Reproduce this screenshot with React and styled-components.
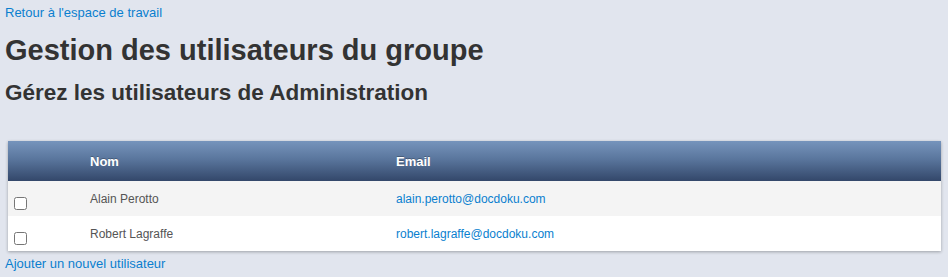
import React from "react";
import styled, { createGlobalStyle } from "styled-components";

const users = [
  { name: "Alain Perotto", email: "alain.perotto@docdoku.com" },
  { name: "Robert Lagraffe", email: "robert.lagraffe@docdoku.com" },
];

const GlobalStyle = createGlobalStyle`
  html, body {
    margin: 0;
    padding: 0;
    background: #e1e5ee;
    font-family: "Liberation Sans", Arial, Helvetica, sans-serif;
    color: #333;
  }
`;

const Page = styled.div`
  padding: 4px 7px 10px 5px;
  display: flex;
  flex-direction: column;
  align-items: flex-start;
`;

const Link = styled.a`
  font-size: 13px;
  line-height: 18px;
  color: #0a7fcf;
  text-decoration: none;
  cursor: pointer;
`;

const Title = styled.h1`
  font-size: 29px;
  line-height: 36px;
  font-weight: bold;
  margin: 10px 0 0;
  color: #333;
`;

const Subtitle = styled.h2`
  font-size: 22.5px;
  line-height: 26px;
  font-weight: bold;
  margin: 12px 0 0;
  color: #333;
`;

const Table = styled.table`
  width: calc(100% - 3px);
  margin: 35px 0 4px 3px;
  border-collapse: collapse;
  table-layout: fixed;
  background: #fff;
  box-shadow: 0 1px 3px rgba(0, 0, 0, 0.3);
  font-size: 12px;
`;

const HeadCell = styled.th`
  height: 40px;
  padding: 0 8px;
  text-align: left;
  font-size: 13px;
  font-weight: bold;
  color: #fff;
  text-shadow: 0 -1px 0 rgba(0, 0, 0, 0.25);
  background: linear-gradient(to bottom, #7694bc 0%, #5a769d 45%, #33476a 100%);
`;

const Row = styled.tr`
  background: ${(p) => (p.$striped ? "#f4f4f4" : "#fff")};
  & + & td {
    border-top: 1px solid #dcdcdc;
  }
`;

const Cell = styled.td`
  height: 35px;
  box-sizing: border-box;
  padding: 0 8px;
  color: #555;
  vertical-align: middle;
`;

const Check = styled.input.attrs({ type: "checkbox" })`
  margin: 9px 0 0 -2px;
  width: 13px;
  height: 13px;
  display: block;
`;

const Mail = styled.a`
  color: #0a7fcf;
  text-decoration: none;
`;

export default function App() {
  return (
    <>
      <GlobalStyle />
      <Page>
        <Link>Retour à l'espace de travail</Link>
        <Title>Gestion des utilisateurs du groupe</Title>
        <Subtitle>Gérez les utilisateurs de Administration</Subtitle>
        <Table>
          <colgroup>
            <col style={{ width: 74 }} />
            <col style={{ width: 306 }} />
            <col />
          </colgroup>
          <thead>
            <tr>
              <HeadCell />
              <HeadCell>Nom</HeadCell>
              <HeadCell>Email</HeadCell>
            </tr>
          </thead>
          <tbody>
            {users.map((u, i) => (
              <Row key={u.email} $striped={i % 2 === 0}>
                <Cell>
                  <Check />
                </Cell>
                <Cell>{u.name}</Cell>
                <Cell>
                  <Mail>{u.email}</Mail>
                </Cell>
              </Row>
            ))}
          </tbody>
        </Table>
        <Link>Ajouter un nouvel utilisateur</Link>
      </Page>
    </>
  );
}
